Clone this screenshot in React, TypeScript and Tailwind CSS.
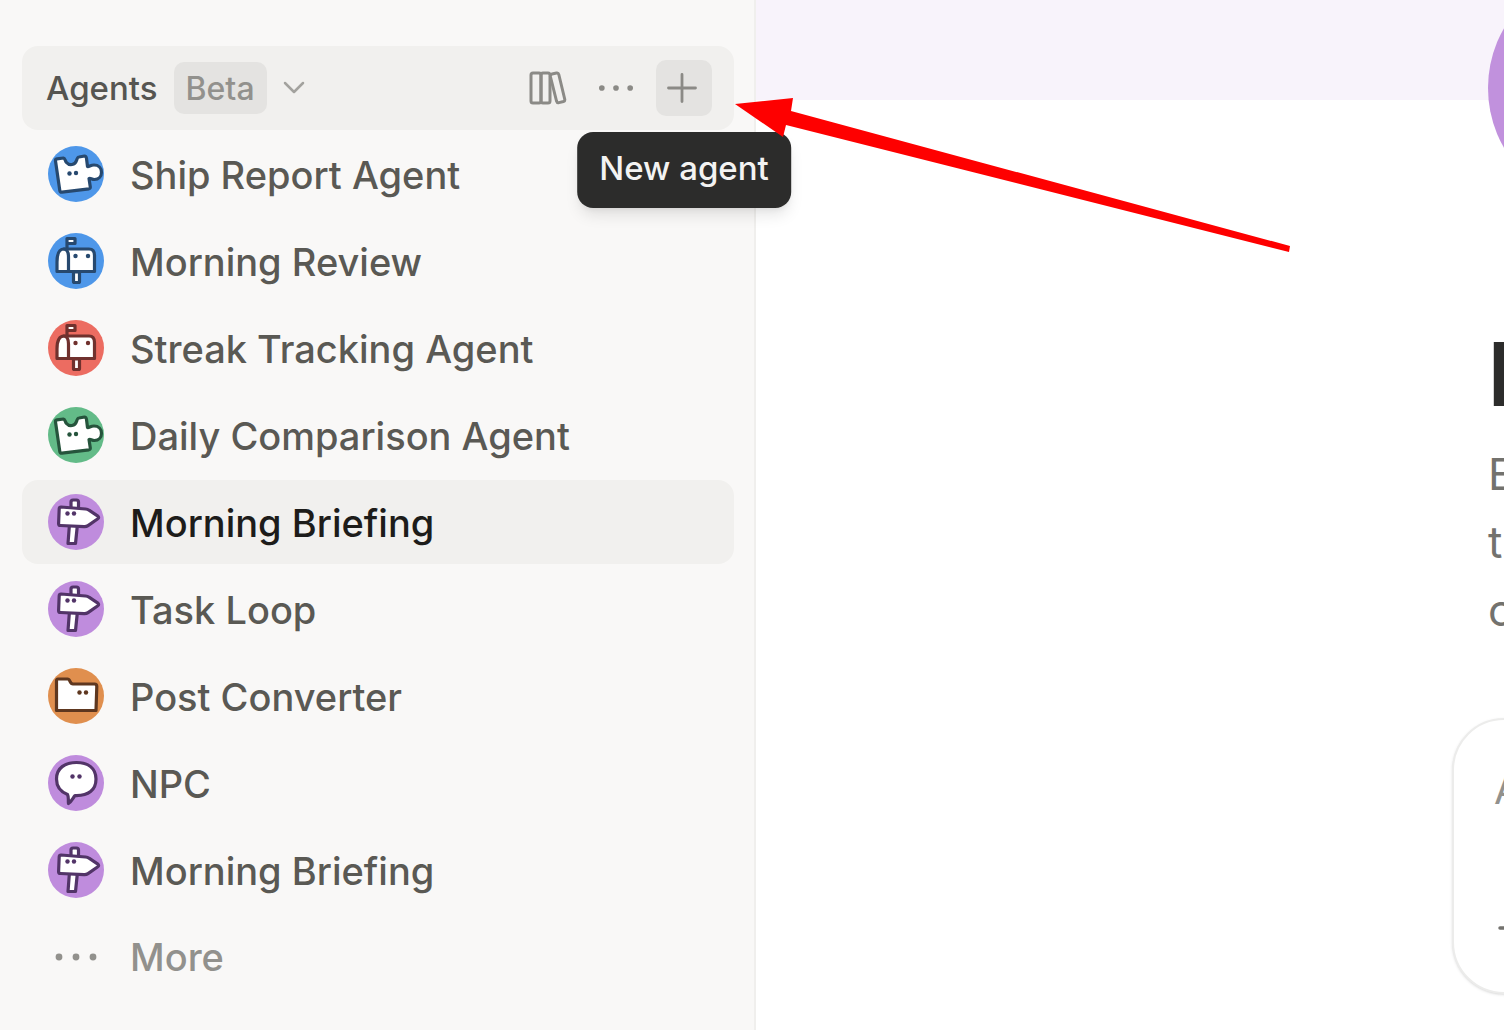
import type { ReactNode } from "react";

type AgentIcon = "puzzle" | "mailbox" | "signpost" | "folder" | "chat";

interface Agent {
  id: number;
  name: string;
  icon: AgentIcon;
  color: keyof typeof iconColors;
  active?: boolean;
}

const iconColors = {
  blue: { fill: "#4e97e9", line: "#27496f" },
  red: { fill: "#ec6c61", line: "#70312e" },
  green: { fill: "#63bb88", line: "#26543c" },
  purple: { fill: "#bf8cdd", line: "#523468" },
  orange: { fill: "#e08f4e", line: "#5e371f" },
};

const agents: Agent[] = [
  { id: 1, name: "Ship Report Agent", icon: "puzzle", color: "blue" },
  { id: 2, name: "Morning Review", icon: "mailbox", color: "blue" },
  { id: 3, name: "Streak Tracking Agent", icon: "mailbox", color: "red" },
  { id: 4, name: "Daily Comparison Agent", icon: "puzzle", color: "green" },
  { id: 5, name: "Morning Briefing", icon: "signpost", color: "purple", active: true },
  { id: 6, name: "Task Loop", icon: "signpost", color: "purple" },
  { id: 7, name: "Post Converter", icon: "folder", color: "orange" },
  { id: 8, name: "NPC", icon: "chat", color: "purple" },
  { id: 9, name: "Morning Briefing", icon: "signpost", color: "purple" },
];

const shapes: Record<AgentIcon, ReactNode> = {
  puzzle: (
    <path d="M7.5 15 C7.3 13.8 7.8 13 9 12.8 L15.5 12 C17 12 17 14.5 18.5 16.5 C21.5 20 27 19 28.5 14.5 C29.5 11.5 29.5 11 31 11 L36.5 10 C38 10 38.3 11 38.5 12.5 L39.5 20.5 C41 21 42.5 19 46 19 C50.5 19 53.5 22 53.5 26.2 C53.5 30.5 50.5 33.5 46.5 33.5 C43.5 33.5 42.5 31.5 41 32.5 L42.3 41 C42.4 42 42 42.6 41 42.8 L14 46.2 C12.5 46.3 12 46 11.8 44.5 Z" />
  ),
  mailbox: (
    <>
      <path d="M19 17 V5.5 H27 V10.5 H19" />
      <rect x="25.5" y="39" width="6" height="10.5" rx="1" />
      <path d="M16 16 H41 C45 16 46.5 18.5 46.5 22.5 V38.5 H9 V29 C9 21.5 10.5 16 16 16 Z" />
      <path d="M16 16 C20 16.5 20.5 20 20.5 24 V38.5" fill="none" />
    </>
  ),
  signpost: (
    <>
      <rect x="23" y="6" width="7.5" height="10" rx="2" />
      <path d="M21.5 30 H29.5 L27.5 49.5 H20 Z" />
      <path d="M13 13 L37.5 15 C39 15.2 40 15.5 41 16.2 L49.5 21.8 C51 23 51 24 49.5 25 L40 31.6 C38.8 32.5 37.5 32.8 36 32.7 L12.5 31.5 C11 31.4 10.5 31 10.6 29.5 L11.2 14.8 C11.3 13.4 11.6 13 13 13 Z" />
    </>
  ),
  folder: (
    <path d="M10 11 H19.5 C22.5 11 21.5 16 25 16 H46.5 C48.5 16 48.8 17 48.8 18.5 L48 42.5 H8.5 V13 C8.5 11.5 9 11 10 11 Z" />
  ),
  chat: (
    <path d="M28.5 7.5 C40 7.5 48 13 48 24 C48 35 40.5 41 27 40.5 C25 43 23.5 46.5 20.5 48.5 C20 45.5 21 42.5 19.5 39.5 C12 36.5 8.5 31.5 8.5 24 C8.5 13 17 7.5 28.5 7.5 Z" />
  ),
};

const eyes: Record<AgentIcon, [number, number][]> = {
  puzzle: [[21.5, 27.5], [28, 27]],
  mailbox: [[27.5, 23], [40, 23]],
  signpost: [[19.5, 19.5], [26, 19.5]],
  folder: [[31.5, 24.5], [38, 24.5]],
  chat: [[24.5, 21.5], [31.5, 21.5]],
};

function AgentAvatar({ icon, color }: { icon: AgentIcon; color: keyof typeof iconColors }) {
  const { fill, line } = iconColors[color];
  return (
    <svg viewBox="0 0 56 56" className="size-14 shrink-0" aria-hidden="true">
      <circle cx="28" cy="28" r="28" fill={fill} />
      <g fill="#fff" stroke={line} strokeWidth="3.2" strokeLinejoin="round" strokeLinecap="round">
        {shapes[icon]}
      </g>
      {eyes[icon].map(([cx, cy]) => (
        <circle key={cx} cx={cx} cy={cy} r="2.2" fill={line} />
      ))}
    </svg>
  );
}

function Dots({ className }: { className: string }) {
  return (
    <svg viewBox="0 0 44 12" className={className} fill="currentColor" aria-hidden="true">
      <circle cx="5" cy="6" r="3.4" />
      <circle cx="22" cy="6" r="3.4" />
      <circle cx="39" cy="6" r="3.4" />
    </svg>
  );
}

function SidebarHeader() {
  return (
    <div className="flex h-21 items-center rounded-2xl bg-[#f1f0ee] pl-6 pr-[22px]">
      <h2 className="pt-0.5 text-[33px] font-medium text-[#565551]">Agents</h2>
      <span className="ml-4 flex h-[52px] items-center rounded-[10px] bg-[#e4e3e1] px-3 pt-0.5 text-[32px] font-medium text-[#92918d]">
        Beta
      </span>
      <button type="button" aria-label="Agent sections" className="ml-4 text-[#a3a29e]">
        <svg viewBox="0 0 22 16" className="h-4 w-[22px]" fill="none" stroke="currentColor" strokeWidth="2.5" strokeLinecap="round" strokeLinejoin="round">
          <path d="M2 3 L11 12 L20 3" />
        </svg>
      </button>
      <div className="ml-auto flex items-center text-[#8b8a86]">
        <button type="button" aria-label="Library">
          <svg viewBox="0 0 38 34" className="h-[34px] w-[38px]" fill="none" stroke="currentColor" strokeWidth="3" strokeLinejoin="round">
            <rect x="2" y="2" width="10" height="30" rx="2" />
            <rect x="12" y="2" width="9" height="30" rx="2" />
            <path d="M23 3 L27.5 2 C29 1.7 29.5 2.3 29.8 3.5 L35.7 28 C36 29.5 35.5 30.2 34.5 30.5 L30 31.6 C28.5 32 27.9 31.3 27.5 30 L21.5 6 C21.2 4.5 21.5 3.4 23 3 Z" />
          </svg>
        </button>
        <button type="button" aria-label="Agent options" className="ml-[30px]">
          <Dots className="h-2.5 w-[38px]" />
        </button>
        <div className="relative ml-[21px]">
          <button
            type="button"
            aria-label="New agent"
            aria-describedby="new-agent-tip"
            className="flex size-14 items-center justify-center rounded-[10px] bg-[#e4e3e1]"
          >
            <svg viewBox="0 0 30 30" className="mr-1 size-[30px]" fill="none" stroke="currentColor" strokeWidth="2.8" strokeLinecap="round">
              <path d="M15 1.5 V28.5 M1.5 15 H28.5" />
            </svg>
          </button>
          <div
            id="new-agent-tip"
            role="tooltip"
            className="absolute left-1/2 top-full z-10 mt-4 flex h-19 -translate-x-1/2 items-center whitespace-nowrap rounded-2xl bg-[#2c2c2b] px-[22px] pb-0.5 text-[33px] font-medium text-[#f3f3f2] shadow-lg"
          >
            New agent
          </div>
        </div>
      </div>
    </div>
  );
}

function Sidebar() {
  return (
    <aside className="w-[756px] shrink-0 border-r-2 border-[#f0efed] bg-[#f9f8f7] pl-[22px] pr-5 pt-[46px]">
      <SidebarHeader />
      <nav className="mt-0.5 flex flex-col gap-[3px]">
        {agents.map((agent) => (
          <a
            key={agent.id}
            href="#"
            aria-current={agent.active ? "page" : undefined}
            className={`flex h-21 items-center gap-[26px] rounded-2xl pl-[26px] text-[38px] font-medium ${
              agent.active ? "bg-[#f1f0ee] text-[#1d1c1a]" : "text-[#5a5954]"
            }`}
          >
            <AgentAvatar icon={agent.icon} color={agent.color} />
            <span className="pt-0.5">{agent.name}</span>
          </a>
        ))}
        <button
          type="button"
          className="flex h-21 items-center gap-[26px] rounded-2xl pl-[26px] text-[38px] font-medium text-[#92918d]"
        >
          <span className="flex size-14 items-center justify-center">
            <Dots className="h-3 w-11" />
          </span>
          <span>More</span>
        </button>
      </nav>
    </aside>
  );
}

function AgentPage() {
  return (
    <main className="min-w-0 flex-1 overflow-hidden bg-white">
      <div className="h-25 bg-[#f8f3fb]" />
      <div className="ml-[696px] w-[1200px]">
        {/* Avatar overlaps the cover band */}
        <div className="-mt-[132px] ml-9 size-60 rounded-full bg-[#c191dd]" />
        <div className="ml-9 mt-[110px]">
          <h1 className="text-[88px] font-bold leading-[112px] text-[#2c2c2b]">B</h1>
          <p className="mt-2.5 text-[44px] leading-[68px] text-[#73726e]">
            E<br />t<br />c
          </p>
        </div>
        <form className="mt-[74px] h-[276px] rounded-[52px] border-2 border-[#ececeb] bg-white pl-10 pt-10 shadow-sm">
          <textarea
            aria-label="Message"
            placeholder="A"
            rows={1}
            className="block w-full resize-none text-[40px] leading-[60px] outline-none placeholder:text-[#92918d]"
          />
          <button type="button" aria-label="Add attachment" className="mt-[90px] ml-1 block text-[#73726e]">
            <svg viewBox="0 0 36 36" className="size-9" fill="none" stroke="currentColor" strokeWidth="3.5" strokeLinecap="round">
              <path d="M18 2 V34 M2 18 H34" />
            </svg>
          </button>
        </form>
      </div>
    </main>
  );
}

export default function App() {
  return (
    <div className="relative flex h-screen overflow-hidden bg-white font-['Inter',sans-serif]">
      <Sidebar />
      <AgentPage />
      {/* Arrow pointing at the new agent button */}
      <svg
        viewBox="0 0 556 156"
        className="pointer-events-none absolute left-[735px] top-[98px] z-20 h-[156px] w-[556px]"
        fill="#fe0000"
        aria-hidden="true"
      >
        <path d="M0 6 L58 0 L56 13 L555 148 L554 154 L51 27 L48 39 Z" />
      </svg>
    </div>
  );
}
